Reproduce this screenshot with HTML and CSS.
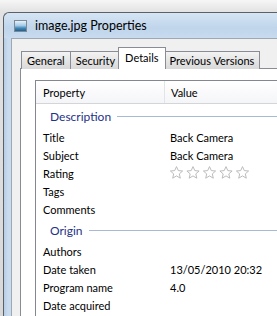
FILE: index.html
```html
<!DOCTYPE html>
<html lang="en">
<head>
    <meta charset="UTF-8">
    <title>image.jpg Properties</title>
    <link rel="stylesheet" href="styles.css">
</head>
<body>
    <div class="ventana">
        <!-- Barra de titulo -->
        <div class="barra-titulo">
            <svg class="icono" width="13" height="12" viewBox="0 0 13 12">
                <defs>
                    <linearGradient id="cielo" x1="0" y1="0" x2="0" y2="1">
                        <stop offset="0" stop-color="#eef5fb"/>
                        <stop offset="0.45" stop-color="#a5cbe7"/>
                        <stop offset="0.7" stop-color="#3f86b8"/>
                        <stop offset="1" stop-color="#1c5a86"/>
                    </linearGradient>
                </defs>
                <rect x="0.5" y="0.5" width="12" height="11" fill="url(#cielo)" stroke="#7d8a96"/>
            </svg>
            <span class="titulo">image.jpg Properties</span>
        </div>

        <div class="cliente">
            <div class="pestanas">
                <div class="pestana">General</div>
                <div class="pestana">Security</div>
                <div class="pestana activa">Details</div>
                <div class="pestana">Previous Versions</div>
            </div>

            <div class="panel">
                <div class="lista">
                    <div class="cabecera">
                        <div class="col-prop">Property</div>
                        <div class="col-valor">Value</div>
                    </div>

                    <div class="grupo"><span>Description</span></div>
                    <div class="fila"><div class="col-prop">Title</div><div class="col-valor">Back Camera</div></div>
                    <div class="fila"><div class="col-prop">Subject</div><div class="col-valor">Back Camera</div></div>
                    <div class="fila">
                        <div class="col-prop">Rating</div>
                        <div class="col-valor estrellas">
                            <svg width="84" height="14" viewBox="0 0 84 14">
                                <defs>
                                    <path id="estrella" d="M6.5 0.6 L8.3 4.6 L12.6 5.0 L9.3 7.9 L10.3 12.2 L6.5 9.9 L2.7 12.2 L3.7 7.9 L0.4 5.0 L4.7 4.6 Z" fill="#fff" stroke="#b4b4b4" stroke-width="0.9" stroke-linejoin="round"/>
                                </defs>
                                <use href="#estrella" x="0"/>
                                <use href="#estrella" x="16.5"/>
                                <use href="#estrella" x="33"/>
                                <use href="#estrella" x="49.5"/>
                                <use href="#estrella" x="66"/>
                            </svg>
                        </div>
                    </div>
                    <div class="fila"><div class="col-prop">Tags</div><div class="col-valor"></div></div>
                    <div class="fila"><div class="col-prop">Comments</div><div class="col-valor"></div></div>

                    <div class="grupo"><span>Origin</span></div>
                    <div class="fila"><div class="col-prop">Authors</div><div class="col-valor"></div></div>
                    <div class="fila"><div class="col-prop">Date taken</div><div class="col-valor">13/05/2010 20:32</div></div>
                    <div class="fila"><div class="col-prop">Program name</div><div class="col-valor">4.0</div></div>
                    <div class="fila"><div class="col-prop">Date acquired</div><div class="col-valor"></div></div>
                </div>
            </div>
        </div>
    </div>
</body>
</html>
```

FILE: styles.css
```css
html, body {
    margin: 0;
    height: 100%;
    overflow: hidden;
}
body {
    background: linear-gradient(to bottom, #f6f6f6, #e2e2e2 12px, #d8d8d8);
    font-family: 'Lato', sans-serif;
    font-size: 11px;
    color: #000;
}
.ventana {
    margin: 12px 0 0 3px;
    height: 400px;
    border: 1px solid #5d6166;
    border-right: none;
    border-bottom: none;
    border-radius: 6px 0 0 0;
    background: linear-gradient(to right, #b7cde4, #c9dcef 4px);
    padding-left: 7px;
}
.barra-titulo {
    height: 25px;
    display: flex;
    align-items: center;
    gap: 8px;
    background: linear-gradient(to bottom, #d6e5f4, #bfd5eb 60%, #c8dbef);
    margin-left: -7px;
    padding-left: 10px;
    border-radius: 6px 0 0 0;
}
.icono {
    margin-top: 1px;
}
.titulo {
    font-size: 12.5px;
}
.cliente {
    height: 100%;
    background-color: #f0f0f0;
    border-left: 1px solid #9ea7b2;
    border-top: 1px solid #9ea7b2;
    padding: 8px 0 0 8px;
}
.pestanas {
    display: flex;
    align-items: flex-end;
    padding-left: 1px;
    height: 22px;
    position: relative;
    z-index: 1;
    white-space: nowrap;
}
.pestana {
    flex-shrink: 0;
    height: 17px;
    line-height: 17px;
    padding: 0 5px;
    border: 1px solid #898c95;
    border-bottom: none;
    margin-right: -1px;
    background: linear-gradient(to bottom, #f3f3f3, #e5e5e5 50%, #d9d9d9);
}
.pestana.activa {
    position: relative;
    height: 21px;
    line-height: 19px;
    background: #fff;
    margin: 0 -2px 0 -2px;
    padding: 0 6px;
}
.panel {
    margin-top: -1px;
    background: #fff;
    border: 1px solid #898c95;
    border-right: none;
    height: 300px;
    padding: 11px 0 0 14px;
}
.lista {
    border: 1px solid #828790;
    border-right: none;
    height: 280px;
}
.cabecera {
    display: flex;
    height: 22px;
    align-items: center;
    border-bottom: 1px solid #d5d5d5;
    background: linear-gradient(to bottom, #ffffff, #f4f5f8);
}
.cabecera .col-prop {
    border-right: 1px solid #e3e4e6;
    height: 100%;
    display: flex;
    align-items: center;
}
.col-prop {
    width: 121px;
    padding-left: 7px;
}
.col-valor {
    padding-left: 6px;
}
.grupo {
    height: 24px;
    display: flex;
    align-items: center;
    padding-left: 14px;
    color: #1e3287;
    font-size: 12px;
    gap: 6px;
}
.grupo::after {
    content: "";
    flex: 1;
    height: 1px;
    background: #a8b9d3;
}
.fila {
    display: flex;
    height: 18px;
    align-items: center;
}
.estrellas {
    display: flex;
    align-items: center;
}
.estrellas svg {
    display: block;
}
```
